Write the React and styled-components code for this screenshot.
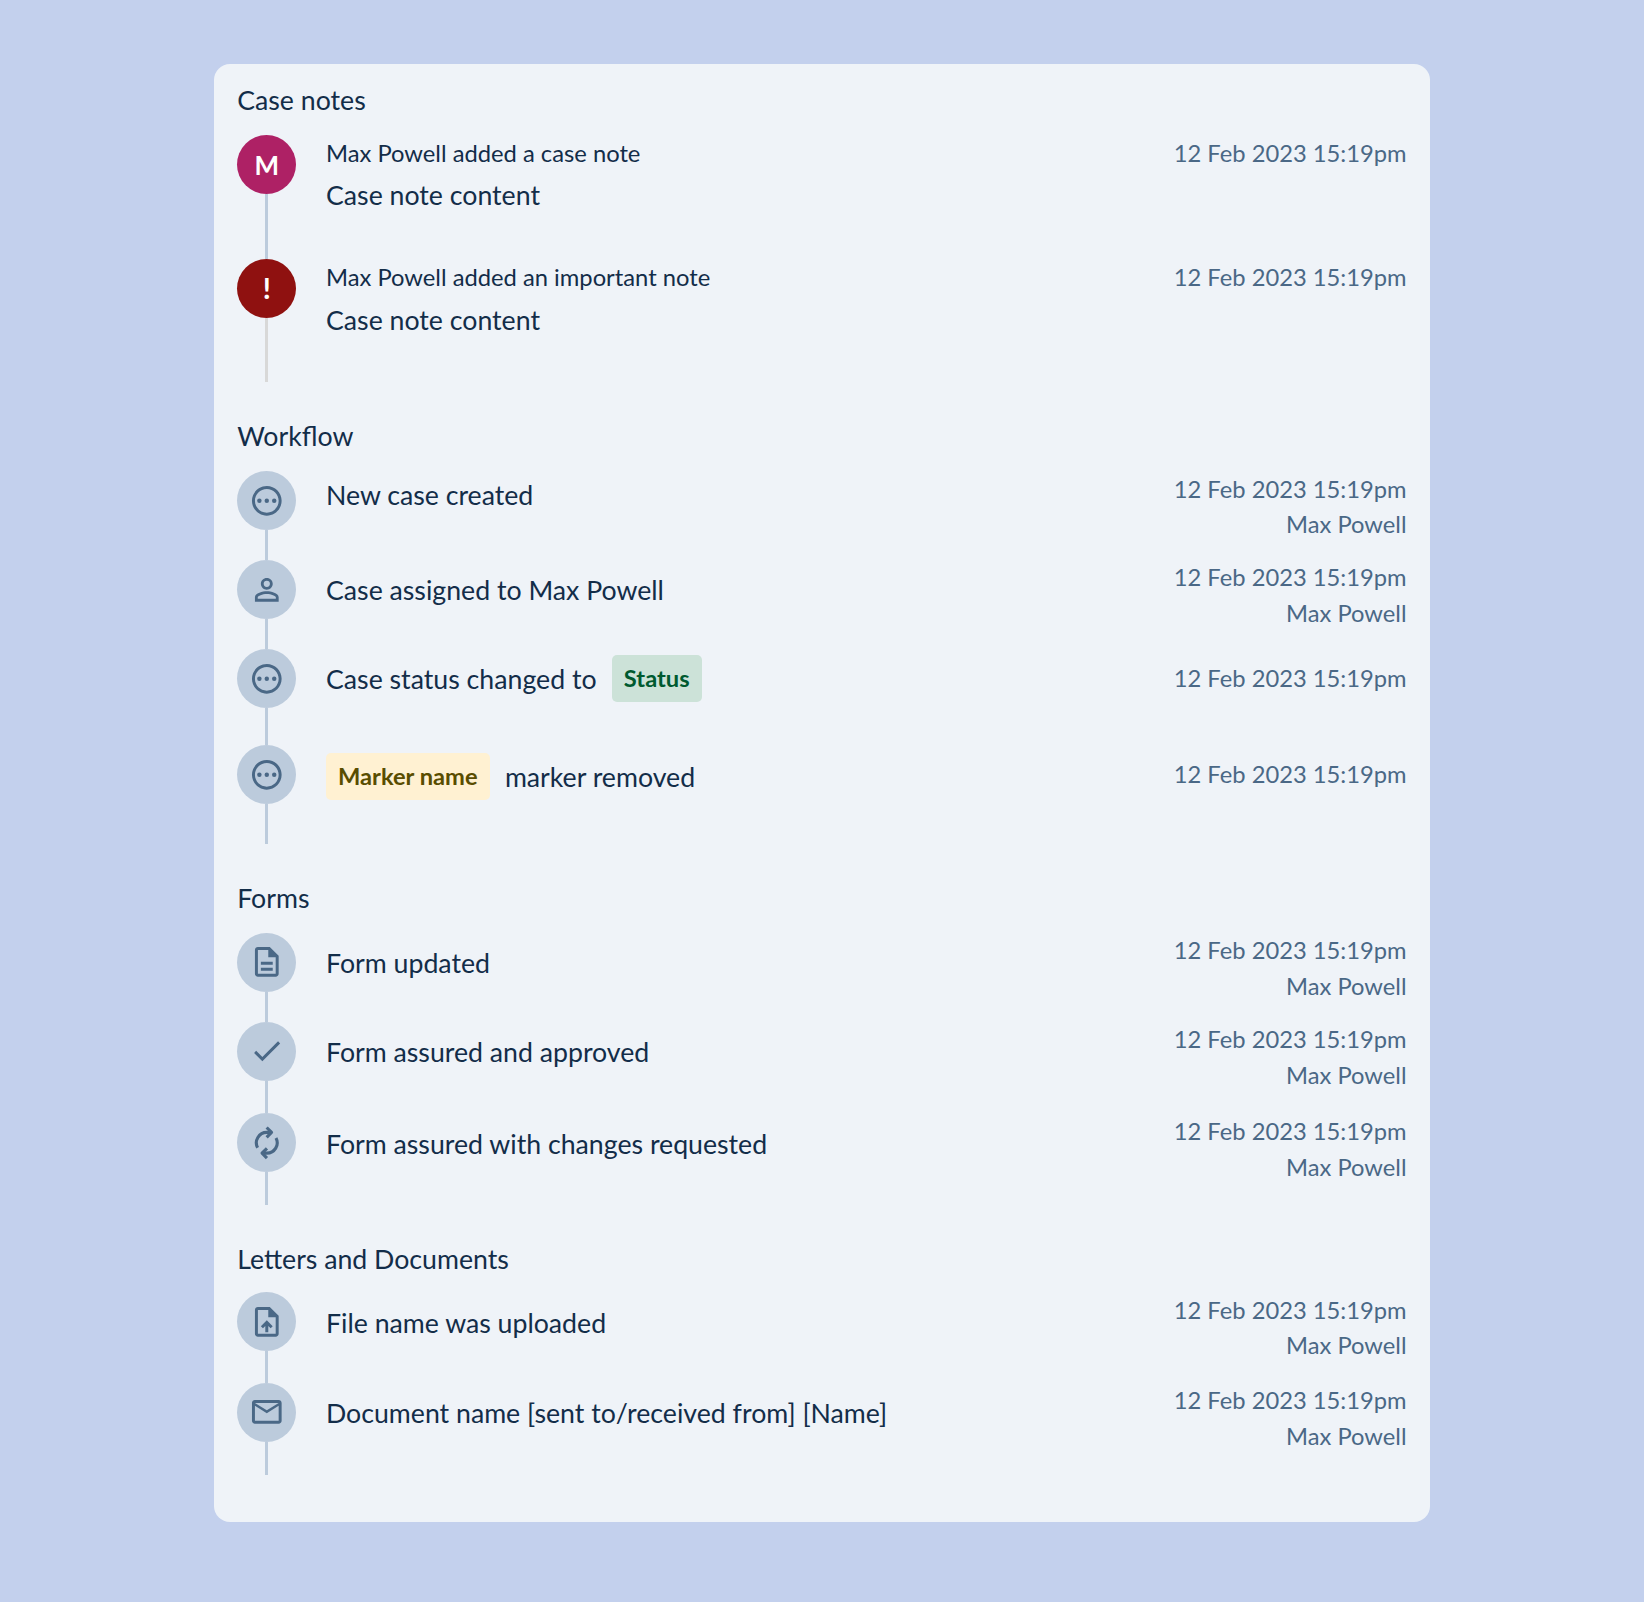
import React from "react";
import styled, { createGlobalStyle } from "styled-components";
import {
  MdOutlinePending,
  MdPersonOutline,
  MdOutlineDescription,
  MdCheck,
  MdOutlineUploadFile,
  MdMailOutline,
} from "react-icons/md";

const GlobalStyle = createGlobalStyle`
  *, *::before, *::after { box-sizing: border-box; }
  body {
    margin: 0;
    background: #c3d0ed;
    color: #132d49;
    font-family: Lato, "Liberation Sans", sans-serif;
  }
`;

const Page = styled.main`
  min-height: 1602px;
  padding: 64px 214px 80px;
`;

const Card = styled.div`
  height: 1458px;
  padding: 18px 23.5px 0 23.2px;
  background: #eff3f8;
  border-radius: 16px;
`;

const Section = styled.section`
  margin-bottom: ${(p) => p.$gap}px;
`;

const Heading = styled.h2`
  margin: 0 0 ${(p) => p.$gap || 16.7}px;
  height: 36px;
  font-size: 26.7px;
  line-height: 36px;
  font-weight: 400;
`;

const Entry = styled.article`
  display: flex;
  align-items: flex-start;
  height: ${(p) => p.$height}px;
`;

const Rail = styled.div`
  display: flex;
  flex-direction: column;
  align-items: center;
  flex: 0 0 59.3px;
  height: 100%;
  margin-right: 29.5px;
`;

const Badge = styled.div`
  display: flex;
  align-items: center;
  justify-content: center;
  flex: none;
  width: 59.3px;
  height: 59.3px;
  padding-top: ${(p) => Math.max(p.$shift || 0, 0)}px;
  padding-bottom: ${(p) => Math.max(-(p.$shift || 0), 0)}px;
  border-radius: 50%;
  background: ${(p) => p.$color || "#bccbdc"};
  color: ${(p) => (p.$color ? "#fff" : "#4a6886")};
  font-size: ${(p) => p.$size || 26.7}px;
  line-height: 1;
  font-weight: 700;

  svg {
    width: 35.6px;
    height: 35.6px;
  }
`;

const Connector = styled.div`
  flex: 1;
  width: 3px;
  background: ${(p) => p.$color || "#bccbdc"};
`;

const Body = styled.div`
  flex: 1;
  padding-top: ${(p) => p.$offset}px;
`;

const Line = styled.div`
  display: flex;
  align-items: center;
  gap: 15.3px;
  font-size: 26.7px;
  line-height: 36px;
  white-space: nowrap;
`;

const Author = styled.div`
  margin-bottom: ${(p) => p.$gap}px;
  font-size: 23.76px;
  line-height: 36px;
`;

const Tag = styled.span`
  height: 47.4px;
  padding: 0 12px;
  border-radius: 5px;
  background: ${(p) => (p.$tone === "green" ? "#cce2d8" : "#fff1d2")};
  color: ${(p) => (p.$tone === "green" ? "#005a30" : "#594d00")};
  font-size: 23.7px;
  line-height: 47.4px;
  font-weight: 700;
`;

const Meta = styled.div`
  padding-top: ${(p) => p.$offset}px;
  color: #4a6886;
  font-size: 23.73px;
  line-height: 35.6px;
  text-align: right;
  white-space: nowrap;
`;

const RenewIcon = () => (
  <svg viewBox="0 0 24 24" fill="none" stroke="currentColor" strokeWidth="2.1">
    <path d="M5.8 15.3A7 7 0 0 1 12 5h3" />
    <path d="M11.9 1.7L15.2 5l-3.3 3.3" strokeLinejoin="round" />
    <path d="M18.2 8.7A7 7 0 0 1 12 19H9" />
    <path d="M12.1 22.3L8.8 19l3.3-3.3" strokeLinejoin="round" />
  </svg>
);

const DATE = "12 Feb 2023 15:19pm";
const USER = "Max Powell";

const sections = [
  {
    title: "Case notes",
    gap: 36.1,
    entries: [
      { height: 124.4, mark: "M", color: "#ae2165", size: 26, shift: 2, author: "Max Powell added a case note", gap: 6, text: "Case note content", offset: 0.6, metaOffset: 1 },
      { height: 122.8, mark: "!", color: "#8f1110", size: 29, shift: -3, rail: "#d8d8d8", author: "Max Powell added an important note", gap: 7.4, text: "Case note content", offset: 0, metaOffset: 1 },
    ],
  },
  {
    title: "Workflow",
    gap: 36,
    entries: [
      { height: 89, mark: <MdOutlinePending />, text: "New case created", offset: 6.7, metaOffset: 1, user: USER },
      { height: 89, mark: <MdPersonOutline />, text: "Case assigned to Max Powell", offset: 12.7, metaOffset: 0.6, user: USER },
      { height: 96, mark: <MdOutlinePending />, text: "Case status changed to", offset: 6.4, metaOffset: 12.1, tag: "Status", tone: "green" },
      { height: 99.3, mark: <MdOutlinePending />, text: "marker removed", offset: 8.2, metaOffset: 12.2, tag: "Marker name", tone: "yellow", tagFirst: true },
    ],
  },
  {
    title: "Forms",
    gap: 36,
    entries: [
      { height: 89, mark: <MdOutlineDescription />, text: "Form updated", offset: 12, metaOffset: 0.6, user: USER },
      { height: 91.5, mark: <MdCheck />, text: "Form assured and approved", offset: 12, metaOffset: 0.6, user: USER },
      { height: 92, mark: <RenewIcon />, text: "Form assured with changes requested", offset: 12.8, metaOffset: 1, user: USER },
    ],
  },
  {
    title: "Letters and Documents",
    gap: 0,
    headingGap: 15,
    entries: [
      { height: 90.5, mark: <MdOutlineUploadFile />, text: "File name was uploaded", offset: 12.4, metaOffset: 0.7, user: USER },
      { height: 92, mark: <MdMailOutline />, text: "Document name [sent to/received from] [Name]", offset: 12.4, metaOffset: 0.7, user: USER },
    ],
  },
];

function TimelineEntry({ entry }) {
  const tag = entry.tag && <Tag $tone={entry.tone}>{entry.tag}</Tag>;
  return (
    <Entry $height={entry.height}>
      <Rail>
        <Badge $color={entry.color} $size={entry.size} $shift={entry.shift}>
          {entry.mark}
        </Badge>
        <Connector $color={entry.rail} />
      </Rail>
      <Body $offset={entry.offset}>
        {entry.author && <Author $gap={entry.gap}>{entry.author}</Author>}
        <Line>
          {entry.tagFirst && tag}
          <span>{entry.text}</span>
          {!entry.tagFirst && tag}
        </Line>
      </Body>
      <Meta $offset={entry.metaOffset}>
        <div>{DATE}</div>
        {entry.user && <div>{entry.user}</div>}
      </Meta>
    </Entry>
  );
}

export default function App() {
  return (
    <>
      <GlobalStyle />
      <Page>
        <Card>
          {sections.map((section) => (
            <Section key={section.title} $gap={section.gap}>
              <Heading $gap={section.headingGap}>{section.title}</Heading>
              {section.entries.map((entry, i) => (
                <TimelineEntry key={i} entry={entry} />
              ))}
            </Section>
          ))}
        </Card>
      </Page>
    </>
  );
}
